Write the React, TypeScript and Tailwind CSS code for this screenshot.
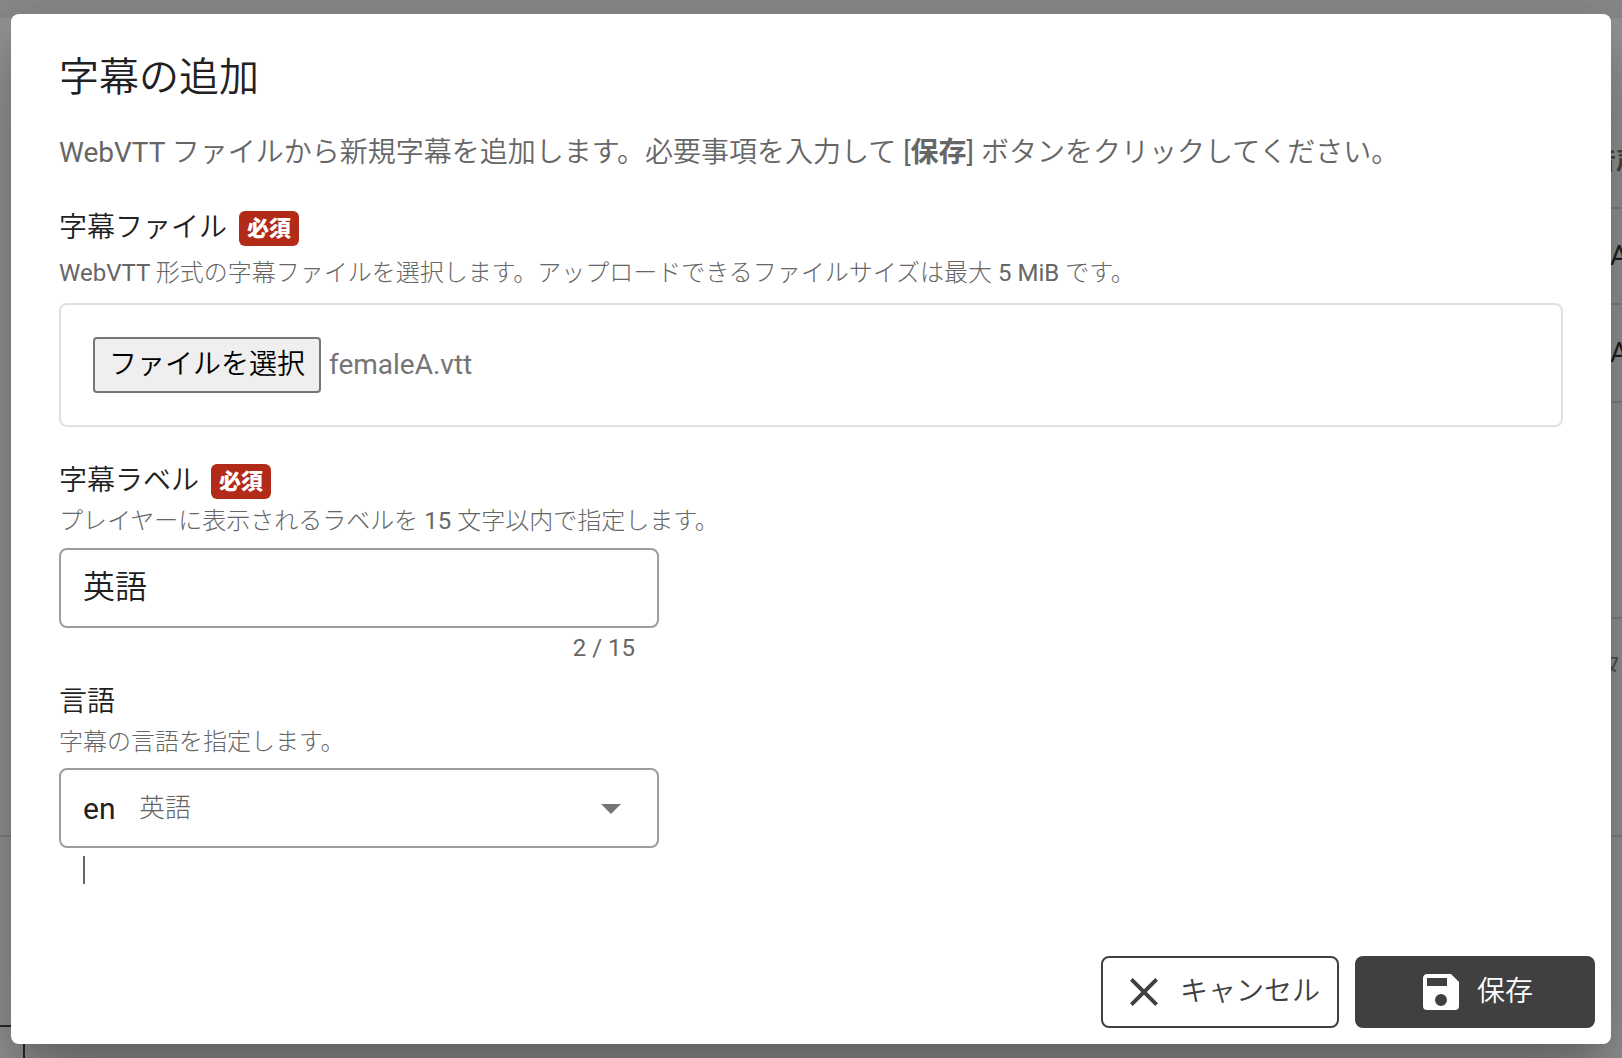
import { useRef, useState } from "react";
import type { ReactNode } from "react";

const MAX_LABEL = 15;

const LANGUAGES = [
  { code: "en", name: "英語" },
  { code: "ja", name: "日本語" },
  { code: "zh", name: "中国語" },
  { code: "ko", name: "韓国語" },
];

function RequiredBadge() {
  return (
    <span className="rounded-md bg-[#b22a18] px-2 font-[Roboto,'Noto_Sans_CJK_JP',sans-serif] text-[22px] leading-[35px] font-black text-white">
      必須
    </span>
  );
}

function FieldLabel({ htmlFor, required, children }: { htmlFor: string; required?: boolean; children: ReactNode }) {
  return (
    <div className="flex h-9 items-center gap-3">
      <label htmlFor={htmlFor} className="text-[28px] leading-9 text-[#212121]">
        {children}
      </label>
      {required && <RequiredBadge />}
    </div>
  );
}

function HelpText({ children }: { children: ReactNode }) {
  return (
    <p className="font-[Roboto,'Noto_Sans_CJK_JP_Light','Noto_Sans_CJK_JP',sans-serif] text-2xl leading-8 text-[#666]">
      {children}
    </p>
  );
}

function PageBehind() {
  return (
    <div aria-hidden="true" className="absolute inset-0 flex flex-col overflow-hidden bg-[#959595] text-[28px] text-[#222]">
      <div className="h-[18px] shrink-0 bg-[#8a8a8a]" />
      <div className="ml-6 flex h-[191px] shrink-0 items-end justify-end border-b-2 border-[#828282]">
        <div className="flex h-24 w-[30px] items-center font-['Noto_Sans_CJK_JP',sans-serif] text-2xl font-bold whitespace-nowrap text-[#444]">
          音声
        </div>
      </div>
      <div className="ml-6 flex h-24 shrink-0 items-center justify-end border-b-2 border-[#828282]">
        <div className="w-3">A</div>
      </div>
      <div className="ml-6 flex h-[98px] shrink-0 items-center justify-end border-b-2 border-[#828282]">
        <div className="w-3">A</div>
      </div>
      <div className="ml-6 h-[216px] shrink-0 border-b-2 border-[#828282]" />
      <div className="flex h-[218px] shrink-0 items-start justify-end border-b-2 border-[#828282]">
        <div className="flex h-24 items-center text-[28px] text-[#555]">タ</div>
      </div>
      <div className="h-[188px] shrink-0" />
      <div className="w-[25px] flex-1 border-t-2 border-r-2 border-[#2a2a2a]" />
    </div>
  );
}

export default function App() {
  const fileRef = useRef<HTMLInputElement>(null);
  const [fileName, setFileName] = useState("femaleA.vtt");
  const [label, setLabel] = useState("英語");
  const [lang, setLang] = useState("en");

  const selected = LANGUAGES.find((l) => l.code === lang);

  return (
    <div
      className="relative flex min-h-screen items-center px-[11px] font-[Roboto,'Noto_Sans_CJK_JP_DemiLight','Noto_Sans_CJK_JP',sans-serif]"
      lang="ja"
    >
      <PageBehind />

      <div
        role="dialog"
        aria-labelledby="dialog-title"
        className="relative w-full rounded-lg bg-white shadow-[0_22px_30px_-14px_rgba(0,0,0,0.2),0_48px_76px_6px_rgba(0,0,0,0.14),0_18px_92px_16px_rgba(0,0,0,0.12)]"
      >
        <div className="px-12 pt-8">
          <h1 id="dialog-title" className="text-[40px] leading-[64px] text-[#212121]">字幕の追加</h1>
          <p className="mt-[23px] text-[28px] leading-10 text-[#666]">
            WebVTT ファイルから新規字幕を追加します。必要事項を入力して [
            <strong className="font-[Roboto,'Noto_Sans_CJK_JP',sans-serif] leading-none font-bold">保存</strong>] ボタンをクリックしてください。
          </p>

          {/* Subtitle file */}
          <div className="mt-[37px]">
            <FieldLabel htmlFor="subtitle-file" required>字幕ファイル</FieldLabel>
            <div className="mt-[11px]">
              <HelpText>WebVTT 形式の字幕ファイルを選択します。アップロードできるファイルサイズは最大 5 MiB です。</HelpText>
            </div>
            <div className="mt-[14px] flex items-center gap-2 rounded-lg border-2 border-[#e0e0e0] p-8">
              <input
                ref={fileRef}
                id="subtitle-file"
                type="file"
                accept=".vtt"
                className="sr-only"
                onChange={(e) => setFileName(e.target.files?.[0]?.name ?? "")}
              />
              <button
                type="button"
                onClick={() => fileRef.current?.click()}
                className="h-14 rounded border-2 border-[#767676] bg-[#efefef] px-[14px] text-[28px] leading-9 text-black"
              >
                ファイルを選択
              </button>
              <span className="text-[28px] leading-9 text-[#757575]">{fileName}</span>
            </div>
          </div>

          {/* Label */}
          <div className="mt-9">
            <FieldLabel htmlFor="subtitle-label" required>字幕ラベル</FieldLabel>
            <div className="mt-[6px]">
              <HelpText>プレイヤーに表示されるラベルを 15 文字以内で指定します。</HelpText>
            </div>
            <div className="mt-[11px] w-full max-w-[600px]">
              <input
                id="subtitle-label"
                type="text"
                maxLength={MAX_LABEL}
                value={label}
                onChange={(e) => setLabel(e.target.value)}
                className="block h-20 w-full rounded-lg border-2 border-[#9e9e9e] px-[22px] pb-2 text-[32px] text-[#212121] outline-none"
              />
              <div className="mt-2 pr-6 text-right text-2xl leading-6 text-[#666]">
                {label.length} / {MAX_LABEL}
              </div>
            </div>
          </div>

          {/* Language */}
          <div className="mt-6">
            <FieldLabel htmlFor="subtitle-lang">言語</FieldLabel>
            <div className="mt-[6px]">
              <HelpText>字幕の言語を指定します。</HelpText>
            </div>
            <div className="relative mt-[10px] w-full max-w-[600px]">
              <select
                id="subtitle-lang"
                value={lang}
                onChange={(e) => setLang(e.target.value)}
                className="block h-20 w-full appearance-none rounded-lg border-2 border-[#9e9e9e] bg-white px-[22px] text-[30px] text-[#212121] outline-none"
              >
                {LANGUAGES.map((l) => (
                  <option key={l.code} value={l.code}>{l.code}</option>
                ))}
              </select>
              <div className="pointer-events-none absolute inset-y-0 right-6 left-20 flex items-center justify-between">
                <span className="font-[Roboto,'Noto_Sans_CJK_JP_Light','Noto_Sans_CJK_JP',sans-serif] text-[26px] leading-8 text-[#666]">
                  {selected?.name}
                </span>
                <svg viewBox="0 0 24 24" className="size-12 fill-[#757575]">
                  <path d="M7 10l5 5 5-5z" />
                </svg>
              </div>
            </div>
            <div className="mt-2 ml-6 h-7 w-[2px] bg-[#666]" />
          </div>
        </div>

        <div className="mt-[72px] flex justify-end gap-4 px-4 pb-4">
          <button
            type="button"
            className="flex h-[72px] items-center justify-center gap-3 rounded-lg border-2 border-[#404040] bg-white px-[17px] text-[28px] text-[#404040]"
          >
            <svg viewBox="0 0 24 24" className="size-12 fill-current">
              <path d="M19 6.41L17.59 5 12 10.59 6.41 5 5 6.41 10.59 12 5 17.59 6.41 19 12 13.41 17.59 19 19 17.59 13.41 12z" />
            </svg>
            <span>キャンセル</span>
          </button>
          <button
            type="button"
            className="flex h-[72px] min-w-[240px] items-center justify-center gap-3 rounded-lg bg-[#404040] text-[28px] text-white"
          >
            <svg viewBox="0 0 24 24" className="size-12 fill-current">
              <path d="M15 9H5V5h10m-3 14a3 3 0 0 1-3-3 3 3 0 0 1 3-3 3 3 0 0 1 3 3 3 3 0 0 1-3 3m5-16H5c-1.11 0-2 .9-2 2v14a2 2 0 0 0 2 2h14a2 2 0 0 0 2-2V7l-4-4z" />
            </svg>
            <span>保存</span>
          </button>
        </div>
      </div>
    </div>
  );
}
